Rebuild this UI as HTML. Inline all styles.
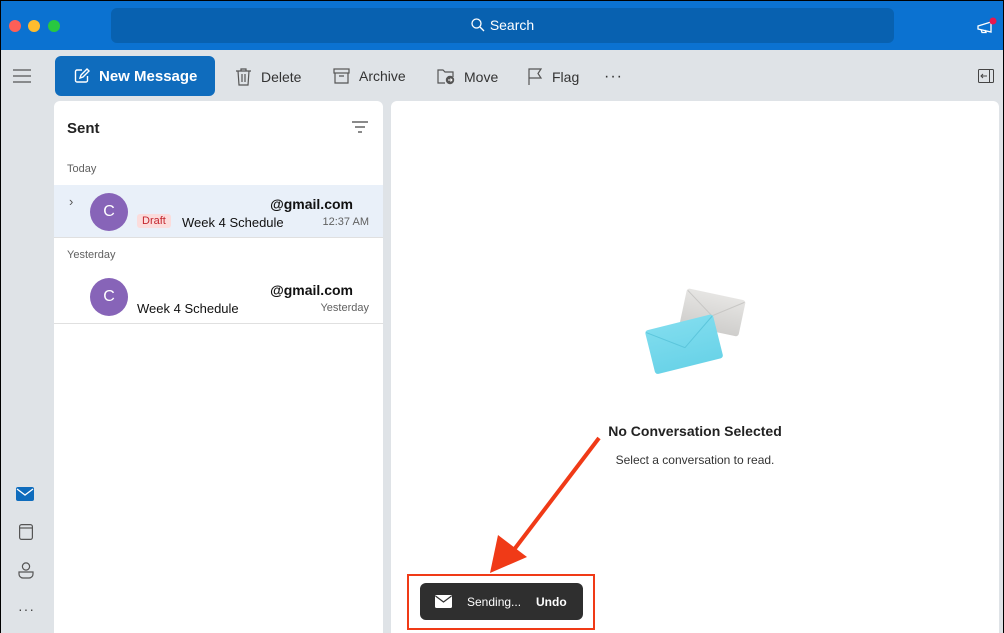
<!DOCTYPE html>
<html><head><meta charset="utf-8"><style>
*{margin:0;padding:0;box-sizing:border-box}
body{width:1004px;height:633px;overflow:hidden;font-family:"Liberation Sans",sans-serif;background:#000;position:relative}
.app{position:absolute;left:1px;top:1px;width:1002px;height:632px;background:#dfe3e7;overflow:hidden}
.top{position:absolute;left:0;top:0;width:1002px;height:49px;background:#0b72d1}
.dot{position:absolute;top:19px;width:12px;height:12px;border-radius:50%}
.search{position:absolute;left:110px;top:7px;width:783px;height:35px;border-radius:6px;background:#0861b0;color:#fff;font-size:14px;text-align:center;line-height:35px}
.tb{position:absolute;top:67px;font-size:14px;color:#333;display:flex;align-items:center;gap:9px}
.nm{position:absolute;left:54px;top:55px;width:160px;height:40px;background:#0f6cbd;border-radius:6px;color:#fff;font-size:15px;font-weight:bold;display:flex;align-items:center;padding-left:19px;gap:9px}
.list{position:absolute;left:53px;top:100px;width:329px;height:540px;background:#fff;border-radius:6px}
.read{position:absolute;left:390px;top:100px;width:608px;height:540px;background:#fff;border-radius:6px}
.av{position:absolute;left:36px;width:38px;height:38px;border-radius:50%;background:#8764b8;color:#fff;font-size:16px;text-align:center;line-height:38px}
.muted{color:#616161}
</style></head><body><div class="app">
<div class="top">
<div class="dot" style="left:8px;background:#fe5f57"></div>
<div class="dot" style="left:27px;background:#febc2e"></div>
<div class="dot" style="left:47px;background:#28c840"></div>
<div class="search"><svg width="14" height="14" viewBox="0 0 14 14" style="vertical-align:-2px;margin-right:5px"><circle cx="5.5" cy="5.5" r="4.5" fill="none" stroke="#fff" stroke-width="1.3"/><path d="M9 9l4 4" stroke="#fff" stroke-width="1.3"/></svg>Search</div>
<svg style="position:absolute;left:975px;top:16px" width="22" height="20" viewBox="0 0 22 20"><path d="M2 9l13-4v10L2 12z M5 12.5l1 3h4l-1-2.5" fill="none" stroke="#fff" stroke-width="1.3"/><circle cx="17" cy="4" r="3.5" fill="#e8174d"/></svg>
</div>
<svg style="position:absolute;left:12px;top:68px" width="18" height="14"><path d="M0 1h18M0 7h18M0 13h18" stroke="#555" stroke-width="1.2"/></svg>
<div class="nm"><svg width="16" height="16" viewBox="0 0 16 16"><path d="M8 2H3a1.5 1.5 0 0 0-1.5 1.5v9A1.5 1.5 0 0 0 3 14h9a1.5 1.5 0 0 0 1.5-1.5V8M6 10l1-3 6-6 2 2-6 6z" fill="none" stroke="#fff" stroke-width="1.4"/></svg>New Message</div>
<div class="tb" style="left:234px"><svg width="17" height="18" viewBox="0 0 17 18"><path d="M1 3h15M6 3V1h5v2M3 3l1 14h9l1-14M7 6v8M10 6v8" fill="none" stroke="#555" stroke-width="1.2"/></svg>Delete</div>
<div class="tb" style="left:332px"><svg width="17" height="16" viewBox="0 0 17 16"><rect x="1" y="1" width="15" height="4" fill="none" stroke="#555" stroke-width="1.2"/><path d="M2 5v10h13V5M6 8h5" fill="none" stroke="#555" stroke-width="1.2"/></svg>Archive</div>
<div class="tb" style="left:435px"><svg width="19" height="17" viewBox="0 0 19 17"><path d="M9 15H2V2h5l2 2h8v5" fill="none" stroke="#555" stroke-width="1.2"/><circle cx="14" cy="12" r="4.2" fill="#555"/><path d="M12 12h4M14.5 10.5l1.5 1.5-1.5 1.5" stroke="#fff" stroke-width="1"/></svg>Move</div>
<div class="tb" style="left:526px"><svg width="16" height="17" viewBox="0 0 16 17"><path d="M2 17V1h12l-3 4.5 3 4.5H2" fill="none" stroke="#555" stroke-width="1.2"/></svg>Flag</div>
<div class="tb" style="left:603px;top:67px;font-size:16px;letter-spacing:1px">···</div>
<svg style="position:absolute;left:977px;top:68px" width="16" height="14"><rect x="0.5" y="0.5" width="15" height="13" rx="1" fill="none" stroke="#444"/><path d="M11.5 1v12M3 7h6M5 5L3 7l2 2" fill="none" stroke="#444"/></svg>

<div class="list">
<div style="position:absolute;left:13px;top:19px;font-size:15px;font-weight:bold;color:#222">Sent</div>
<svg style="position:absolute;left:298px;top:20px" width="16" height="12"><path d="M0 1h16M3 6h10M6 11h4" stroke="#444" stroke-width="1.2"/></svg>
<div class="muted" style="position:absolute;left:13px;top:62px;font-size:11px">Today</div>
<div style="position:absolute;left:0;top:84px;width:329px;height:53px;background:#e9f0f9;border-bottom:1px solid #e0e0e0">
<div style="position:absolute;left:15px;top:9px;font-size:13px;color:#555">›</div>
<div class="av" style="top:8px">C</div>
<div style="position:absolute;right:30px;top:11px;font-size:14px;font-weight:bold;color:#111">@gmail.com</div>
<div style="position:absolute;left:83px;top:29px;background:#fbdcdc;color:#c4262e;font-size:11px;padding:1px 5px;border-radius:3px">Draft</div>
<div style="position:absolute;left:128px;top:30px;font-size:13px;color:#111">Week 4 Schedule</div>
<div class="muted" style="position:absolute;right:14px;top:31px;font-size:11px">12:37 AM</div>
</div>
<div class="muted" style="position:absolute;left:13px;top:148px;font-size:11px">Yesterday</div>
<div style="position:absolute;left:0;top:170px;width:329px;height:53px;border-bottom:1px solid #e0e0e0">
<div class="av" style="top:7px">C</div>
<div style="position:absolute;right:30px;top:11px;font-size:14px;font-weight:bold;color:#111">@gmail.com</div>
<div style="position:absolute;left:83px;top:30px;font-size:13px;color:#111">Week 4 Schedule</div>
<div class="muted" style="position:absolute;right:14px;top:31px;font-size:11px">Yesterday</div>
</div>
</div>

<div class="read">
<svg style="position:absolute;left:250px;top:185px" width="110" height="100" viewBox="0 0 110 100">
<defs><linearGradient id="g" x1="0" y1="0" x2="0" y2="1"><stop offset="0" stop-color="#e6e5e3"/><stop offset="1" stop-color="#cfcecc"/></linearGradient><linearGradient id="b" x1="0" y1="0" x2="0" y2="1"><stop offset="0" stop-color="#7fdcee"/><stop offset="1" stop-color="#6ad3e8"/></linearGradient></defs>
<g transform="rotate(12 72 25)"><rect x="42" y="8" width="60" height="37" rx="3" fill="url(#g)"/><path d="M43 10l29 20 29-20" fill="none" stroke="#c8c7c5"/></g>
<g transform="rotate(-14 42 58)"><rect x="8" y="36" width="70" height="45" rx="3" fill="url(#b)"/><path d="M9 38l34 24 34-24" fill="none" stroke="#5cc6dc"/></g>
</svg>
<div style="position:absolute;left:0;width:608px;top:322px;text-align:center;font-size:14px;font-weight:bold;color:#222">No Conversation Selected</div>
<div style="position:absolute;left:0;width:608px;top:352px;text-align:center;font-size:12px;color:#333">Select a conversation to read.</div>
<div style="position:absolute;left:29px;top:482px;width:163px;height:37px;background:#2f2f2f;border-radius:6px;color:#fff;font-size:12px">
<svg style="position:absolute;left:15px;top:12px" width="17" height="13" viewBox="0 0 17 13"><rect width="17" height="13" rx="1.5" fill="#fff"/><path d="M0.5 1l8 6 8-6" fill="none" stroke="#2f2f2f" stroke-width="1.2"/></svg>
<span style="position:absolute;left:47px;top:12px">Sending...</span>
<span style="position:absolute;left:116px;top:12px;font-weight:bold">Undo</span>
</div>
</div>

<svg style="position:absolute;left:15px;top:486px" width="18" height="14"><rect width="18" height="14" rx="2" fill="#0f6cbd"/><path d="M1 2l8 6 8-6" fill="none" stroke="#fff" stroke-width="1.3"/></svg>
<svg style="position:absolute;left:18px;top:523px" width="14" height="16"><rect x="0.6" y="0.6" width="12.8" height="14.8" rx="2" fill="none" stroke="#555" stroke-width="1.2"/><path d="M1 4h12" stroke="#555" stroke-width="1.2"/></svg>
<svg style="position:absolute;left:17px;top:561px" width="16" height="17"><circle cx="8" cy="4.5" r="3.6" fill="none" stroke="#555" stroke-width="1.2"/><path d="M1 10h14v2a4 4 0 0 1-4 4H5a4 4 0 0 1-4-4z" fill="none" stroke="#555" stroke-width="1.2"/></svg>
<div style="position:absolute;left:17px;top:600px;font-size:14px;color:#444;letter-spacing:1px">···</div>

<div style="position:absolute;left:406px;top:573px;width:188px;height:56px;border:2px solid #f03a17"></div>
<svg style="position:absolute;left:0;top:0" width="1002" height="632"><path d="M598 437L512 550" stroke="#f03a17" stroke-width="4"/><path d="M489 572l8-38 29 22z" fill="#f03a17"/></svg>
</div></body></html>
